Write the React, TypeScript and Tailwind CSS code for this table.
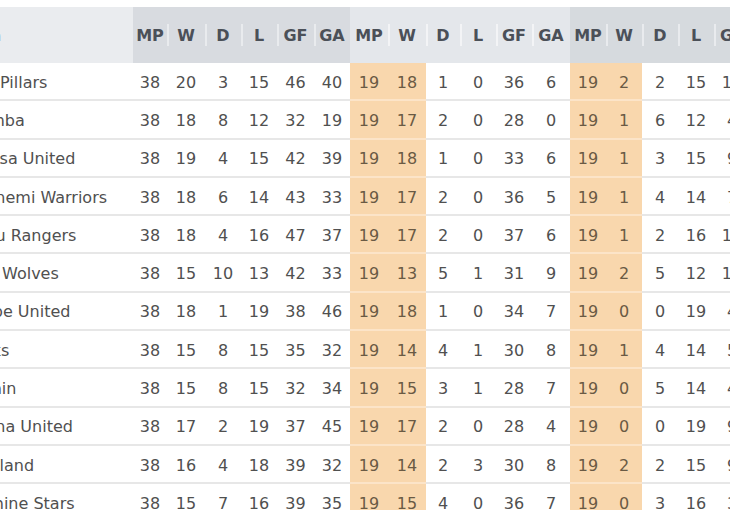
const widths = [
  'w-[34px]', 'w-[38px]', 'w-[36px]', 'w-[36px]', 'w-[37px]', 'w-[36px]',
  'w-[38px]', 'w-[38px]', 'w-[34px]', 'w-[36px]', 'w-[36px]', 'w-[38px]',
  'w-[36px]', 'w-[36px]', 'w-[36px]', 'w-[36px]', 'w-[36px]', 'w-[36px]',
];

const heads = ['MP', 'W', 'D', 'L', 'GF', 'GA'];

const bands = [
  { bg: 'bg-[#d8dbe0]', line: 'bg-[#e9ebee]' },
  { bg: 'bg-[#e4e7eb]', line: 'bg-[#f3f4f6]' },
  { bg: 'bg-[#d6dade]', line: 'bg-[#e9ebee]' },
];

const orange = [6, 7, 12, 13];

const rows: [string, number[]][] = [
  ['Kano Pillars', [38, 20, 3, 15, 46, 40, 19, 18, 1, 0, 36, 6, 19, 2, 2, 15, 10, 34]],
  ['Enyimba', [38, 18, 8, 12, 32, 19, 19, 17, 2, 0, 28, 0, 19, 1, 6, 12, 4, 19]],
  ['Bayelsa United', [38, 19, 4, 15, 42, 39, 19, 18, 1, 0, 33, 6, 19, 1, 3, 15, 9, 33]],
  ['El-Kanemi Warriors', [38, 18, 6, 14, 43, 33, 19, 17, 2, 0, 36, 5, 19, 1, 4, 14, 7, 28]],
  ['Enugu Rangers', [38, 18, 4, 16, 47, 37, 19, 17, 2, 0, 37, 6, 19, 1, 2, 16, 10, 31]],
  ['Warri Wolves', [38, 15, 10, 13, 42, 33, 19, 13, 5, 1, 31, 9, 19, 2, 5, 12, 11, 24]],
  ['Gombe United', [38, 18, 1, 19, 38, 46, 19, 18, 1, 0, 34, 7, 19, 0, 0, 19, 4, 39]],
  ['Sharks', [38, 15, 8, 15, 35, 32, 19, 14, 4, 1, 30, 8, 19, 1, 4, 14, 5, 24]],
  ['Dolphin', [38, 15, 8, 15, 32, 34, 19, 15, 3, 1, 28, 7, 19, 0, 5, 14, 4, 27]],
  ['Kaduna United', [38, 17, 2, 19, 37, 45, 19, 17, 2, 0, 28, 4, 19, 0, 0, 19, 9, 41]],
  ['Heartland', [38, 16, 4, 18, 39, 32, 19, 14, 2, 3, 30, 8, 19, 2, 2, 15, 9, 24]],
  ['Sunshine Stars', [38, 15, 7, 16, 39, 35, 19, 15, 4, 0, 36, 7, 19, 0, 3, 16, 3, 28]],
];

export default function App() {
  return (
    <div className="w-[730px] h-[510px] overflow-hidden bg-white font-['DejaVu_Sans',sans-serif] text-[16px]">
      <div className="ml-[-48px] pt-[7px] w-max">
        {/* header */}
        <div className="flex h-[56px]">
          <div className="w-[181px] pl-[2px] pt-[2px] flex items-center bg-[#eaecef] font-bold text-[#4b5058]">Team</div>
          {widths.map((w, i) => {
            const band = bands[Math.floor(i / 6)];
            return (
              <div key={i} className={`${w} ${band.bg} relative pt-[2px] flex items-center justify-center font-bold text-[#4b5058]`}>
                {i % 6 !== 0 && <div className={`absolute left-0 top-[17px] h-[22px] w-[2px] ${band.line}`} />}
                {heads[i % 6]}
              </div>
            );
          })}
        </div>
        {/* rows */}
        {rows.map(([name, vals]) => (
          <div key={name} className="flex h-[38.3px]">
            <div className="w-[181px] pl-[3px] pt-[3px] flex items-center border-b-2 border-[#e7e7e7] text-[#505050] whitespace-nowrap">
              {name}
            </div>
            {vals.map((v, i) => {
              const hot = orange.includes(i);
              return (
                <div
                  key={i}
                  className={`${widths[i]} pt-[3px] flex items-center justify-center border-b-2 ${
                    hot ? 'bg-[#f9d7ad] border-[#fce4c8] text-[#6a5a44]' : 'border-[#e7e7e7] text-[#505050]'
                  }`}
                >
                  {v}
                </div>
              );
            })}
          </div>
        ))}
      </div>
    </div>
  );
}
